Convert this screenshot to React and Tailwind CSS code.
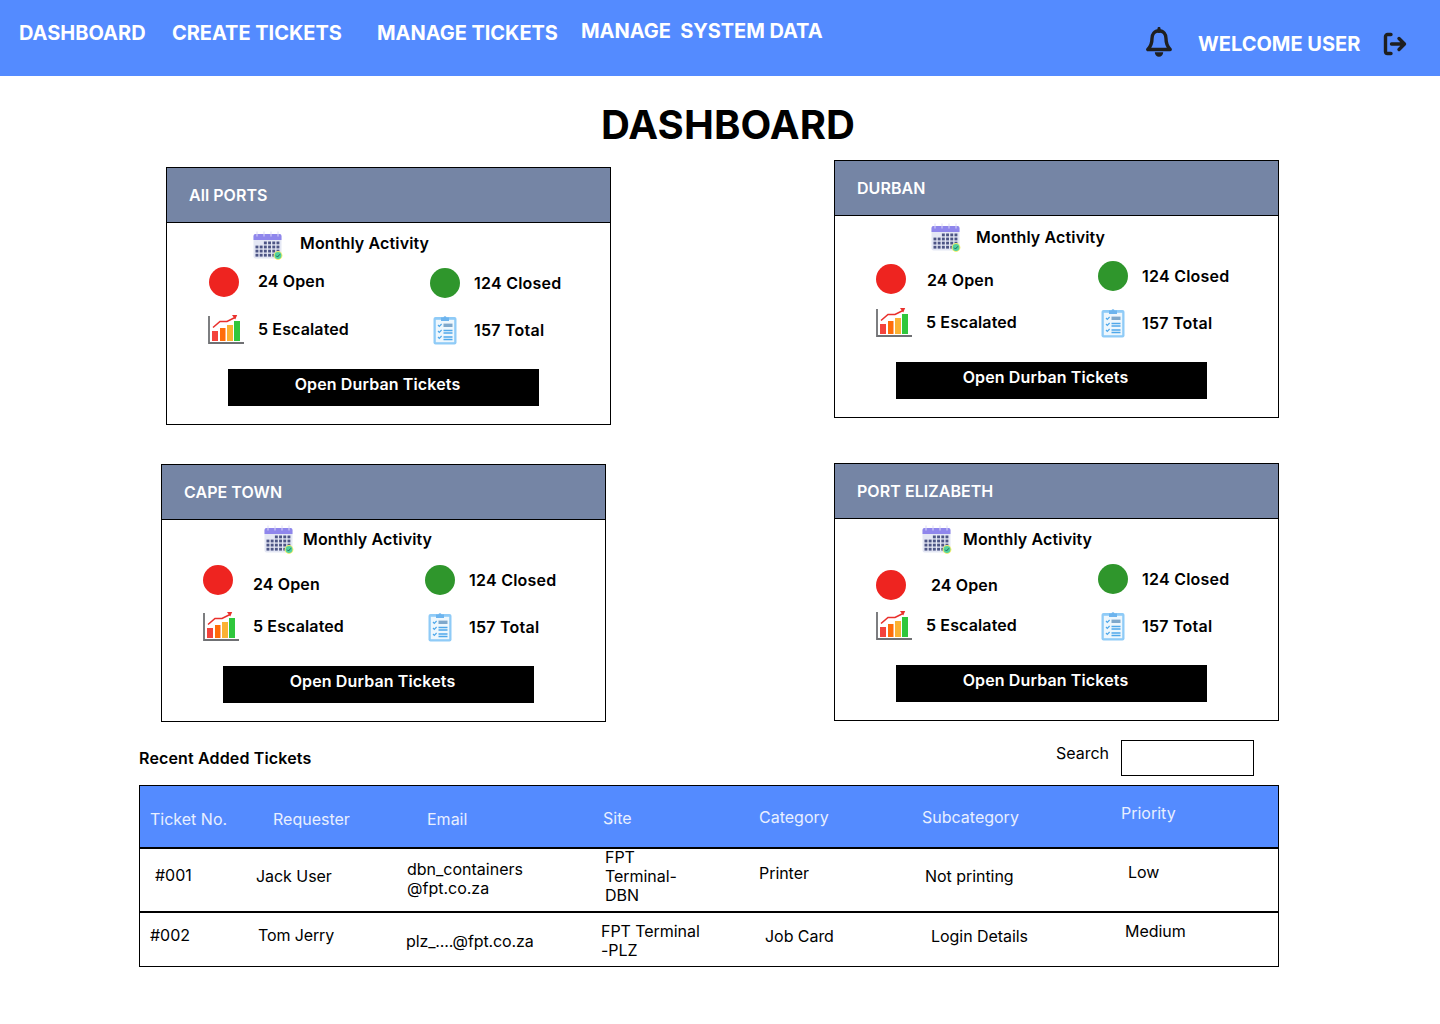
const sans = "font-['Inter','Liberation_Sans',sans-serif]";
const semi = "text-base leading-5 font-semibold tracking-[0.13px] text-black";
const semiNum = "text-base leading-5 font-semibold tracking-[0.24px] text-black";

function Bell() {
  return (
    <svg width="26" height="30" viewBox="0 0 26 30" fill="none" className="shrink-0">
      <path d="M13 3.8c-4.6 0-7 3.5-7 7.8 0 5.4-1.3 8.1-4.2 10.9h22.4c-2.9-2.8-4.2-5.5-4.2-10.9 0-4.3-2.4-7.8-7-7.8z" stroke="#1f1f1f" strokeWidth="3.4" strokeLinejoin="round" />
      <path d="M13 1.4v3" stroke="#1f1f1f" strokeWidth="3" strokeLinecap="round" />
      <path d="M8.8 25.2h8.4c0 2.6-1.9 4.6-4.2 4.6s-4.2-2-4.2-4.6z" fill="#1f1f1f" />
    </svg>
  );
}

function Logout() {
  return (
    <svg width="24" height="24" viewBox="0 0 24 24" fill="none" className="shrink-0">
      <path d="M8 2.5H4.5a2 2 0 0 0-2 2v15a2 2 0 0 0 2 2H8" stroke="#1f1f1f" strokeWidth="3.4" strokeLinecap="round" />
      <path d="M8.5 12h12M16 6.5l5.5 5.5-5.5 5.5" stroke="#1f1f1f" strokeWidth="3.4" strokeLinecap="round" strokeLinejoin="round" />
    </svg>
  );
}

function Calendar() {
  const dots = [];
  for (let r = 0; r < 4; r++) {
    for (let c = 0; c < 6; c++) {
      if (r === 0 && c < 2) continue;
      dots.push(<rect key={`${r}-${c}`} x={2.5 + c * 4.2} y={10.5 + r * 4.1} width="2.9" height="2.8" fill="#4d5585" />);
    }
  }
  return (
    <svg width="30" height="29" viewBox="0 0 30 29" className="block">
      <rect x="0.5" y="3" width="28" height="24.5" rx="2" fill="#e4e7f4" />
      <path d="M0.5 5a2 2 0 0 1 2-2h24a2 2 0 0 1 2 2v4h-28z" fill="#8f86ec" />
      <path d="M4 0.5v5M11 0.5v5M18 0.5v5M25 0.5v5" stroke="#dcd9f7" strokeWidth="1" />
      {dots}
      <circle cx="25" cy="24.5" r="4.4" fill="#f3ee6c" />
      <circle cx="25" cy="24.5" r="3.4" fill="#4fd0a0" />
      <path d="M23.2 24.7l1.3 1.3 2.4-2.7" stroke="#1e5a50" strokeWidth="0.9" fill="none" />
    </svg>
  );
}

function Chart() {
  return (
    <svg width="36" height="30" viewBox="0 0 36 30" className="shrink-0">
      <path d="M1 2v27h35" stroke="#6f7073" strokeWidth="1.8" fill="none" />
      <rect x="4" y="17" width="6" height="10" fill="#f4433c" />
      <rect x="12" y="14" width="5.5" height="13" fill="#ff6d0a" />
      <rect x="19" y="11" width="6" height="16" fill="#fbb232" />
      <rect x="26" y="7" width="6" height="20" fill="#2fc73c" />
      <path d="M5 13.5l7-6h7l8-4" stroke="#e9302c" strokeWidth="1.6" fill="none" />
      <path d="M24 1h5.2l-2 4.4z" fill="#e9302c" />
    </svg>
  );
}

function Clipboard() {
  return (
    <svg width="24" height="31" viewBox="0 0 24 31" className="shrink-0">
      <rect x="0.5" y="3" width="23" height="27.5" rx="2" fill="#8fcbf7" />
      <rect x="2.8" y="5.8" width="18.4" height="22.4" fill="#eef7fd" />
      <path d="M8 3.4h2.4a1.7 1.7 0 0 1 3.2 0H16v3.6H8z" fill="#6db4ee" />
      <path d="M5 11l1.3 1.3L8.6 10M5 17l1.3 1.3 2.3-2.3M5 23l1.3 1.3 2.3-2.3" stroke="#4fa8ea" strokeWidth="1.2" fill="none" />
      <path d="M10.5 9.6h9v3.4h-9z" fill="#7fa8cb" />
      <path d="M10.5 16.5h9M10.5 19h9M10.5 23h9M10.5 25.5h9" stroke="#4fa8ea" strokeWidth="1.3" />
    </svg>
  );
}

function Card({ title, box, monthlyRow, calSlot, monthlyText, pad, col = "w-[222px]", redCls, openText, leftCol, escCol }) {
  return (
    <div className={`${box} h-[258px] w-[445px] shrink-0 border border-black bg-white`}>
      <div className="flex h-[55px] items-center border-b border-black bg-[#7585a5] pl-[22px]">
        <span className="text-base leading-5 font-semibold tracking-[0.05px] text-white">{title}</span>
      </div>
      <div className="h-[146px]">
        <div className={`flex h-[45px] items-start ${monthlyRow}`}>
          <div className={calSlot}>
            <Calendar />
          </div>
          <span className={`${semi} ${monthlyText}`}>Monthly Activity</span>
        </div>
        <div className={`flex h-[46px] items-start ${pad}`}>
          <div className={`flex ${col} shrink-0 items-start`}>
            <div className={leftCol}>
              <div className={`h-[30px] w-[30px] rounded-full bg-[#ee2420] ${redCls}`} />
            </div>
            <span className={`${semi} ${openText}`}>24 Open</span>
          </div>
          <div className="flex items-start">
            <div className="w-[44px] shrink-0">
              <div className="h-[30px] w-[30px] rounded-full bg-[#2f962c]" />
            </div>
            <span className={`${semiNum} mt-[5px]`}>124 Closed</span>
          </div>
        </div>
        <div className={`flex h-[55px] items-start ${pad}`}>
          <div className={`flex ${col} shrink-0 items-start`}>
            <div className={escCol}>
              <Chart />
            </div>
            <span className={`${semi} mt-[5px]`}>5 Escalated</span>
          </div>
          <div className="flex items-start">
            <div className="w-[44px] shrink-0 pl-[3px]">
              <Clipboard />
            </div>
            <span className={`${semiNum} mt-[6px]`}>157 Total</span>
          </div>
        </div>
      </div>
      <button className="ml-[61px] block h-[37px] w-[311px] bg-black pr-[12px] pb-[7px] text-base leading-5 font-semibold tracking-[0.13px] text-white">Open Durban Tickets</button>
    </div>
  );
}

function Cell({ w, mt, children, cls = "tracking-[-0.05px]" }) {
  return <div className={`${w} ${mt} shrink-0 text-base leading-[19px] ${cls}`}>{children}</div>;
}

export default function App() {
  return (
    <div className={`${sans} min-h-[1024px] bg-white text-black`}>
      <header className="flex h-[76px] items-start bg-[#548bff] text-xl leading-6 font-bold text-white">
        <span className="mt-[21px] ml-[19px] w-[153px] shrink-0">DASHBOARD</span>
        <span className="mt-[21px] w-[205px] shrink-0 tracking-[-0.03px]">CREATE TICKETS</span>
        <span className="mt-[21px] w-[204px] shrink-0 tracking-[-0.05px]">MANAGE TICKETS</span>
        <span className="mt-[19px] w-[565px] shrink-0 whitespace-pre tracking-[-0.05px]">MANAGE  SYSTEM DATA</span>
        <span className="mt-[27px] w-[52px] shrink-0"><Bell /></span>
        <span className="mt-[32px] w-[185px] shrink-0">WELCOME USER</span>
        <span className="mt-[32px]"><Logout /></span>
      </header>

      <h1 className="h-[84px] pt-[25px] pl-[16px] text-center text-[40px] leading-[48px] font-bold tracking-[0.1px]">DASHBOARD</h1>

      <div className="flex items-start">
        <Card
          title="All PORTS"
          box="ml-[166px] mt-[7px]"
          monthlyRow="pl-[86px]"
          calSlot="w-[47px] shrink-0 pt-[8px]"
          monthlyText="mt-[10px]"
          pad="pl-[42px]"
          col="w-[221px]"
          redCls="-mt-px"
          openText="mt-[3px]"
          leftCol="w-[49px] shrink-0"
          escCol="w-[49px] shrink-0 -translate-x-px"
        />
        <Card
          title="DURBAN"
          box="ml-[223px]"
          monthlyRow="pl-[96px]"
          calSlot="w-[45px] shrink-0 pt-[7px]"
          monthlyText="mt-[11px]"
          pad="pl-[41px]"
          redCls="mt-[3px]"
          openText="mt-[9px]"
          leftCol="w-[51px] shrink-0"
          escCol="w-[50px] shrink-0"
        />
      </div>

      <div className="mt-[38px] flex items-start">
        <Card
          title="CAPE TOWN"
          box="ml-[161px] mt-px"
          monthlyRow="pl-[102px]"
          calSlot="w-[39px] shrink-0 pt-[5px]"
          monthlyText="mt-[9px]"
          pad="pl-[41px]"
          redCls=""
          openText="mt-[9px]"
          leftCol="w-[50px] shrink-0"
          escCol="w-[50px] shrink-0"
        />
        <Card
          title="PORT ELIZABETH"
          box="ml-[228px]"
          monthlyRow="pl-[87px]"
          calSlot="w-[41px] shrink-0 pt-[6px]"
          monthlyText="mt-[10px]"
          pad="pl-[41px]"
          redCls="mt-[6px]"
          openText="mt-[11px]"
          leftCol="w-[55px] shrink-0"
          escCol="w-[50px] shrink-0"
        />
      </div>

      <div className="mt-[18px] ml-[139px] flex h-[36px] w-[1115px] items-start">
        <span className="mt-[8px] text-base leading-5 font-semibold tracking-[0.15px]">Recent Added Tickets</span>
        <span className="mt-[3px] ml-auto text-base leading-5">Search</span>
        <div className="ml-[12px] h-[36px] w-[133px] border border-black bg-white" />
      </div>

      <div className="mt-[9px] ml-[139px] w-[1140px] border border-black">
        <div className="flex h-[61px] items-start bg-[#548bff] text-[#e8efff]">
          <Cell cls="" w="w-[123px] ml-[10px]" mt="mt-[24px]">Ticket No.</Cell>
          <Cell cls="" w="w-[154px]" mt="mt-[24px]">Requester</Cell>
          <Cell cls="" w="w-[176px]" mt="mt-[24px]">Email</Cell>
          <Cell cls="" w="w-[156px]" mt="mt-[23px]">Site</Cell>
          <Cell cls="" w="w-[163px]" mt="mt-[22px]">Category</Cell>
          <Cell cls="" w="w-[199px]" mt="mt-[22px]">Subcategory</Cell>
          <Cell cls="" w="w-[100px]" mt="mt-[18px]">Priority</Cell>
        </div>
        <div className="flex h-[66px] items-start border-t-2 border-b-2 border-black">
          <Cell w="w-[101px] ml-[15px]" mt="mt-[17px]">#001</Cell>
          <Cell w="w-[151px]" mt="mt-[18px]">Jack User</Cell>
          <Cell cls="" w="w-[198px]" mt="mt-[11px]">dbn_containers<br />@fpt.co.za</Cell>
          <Cell w="w-[154px]" mt="-mt-[1px]">FPT<br />Terminal-<br />DBN</Cell>
          <Cell w="w-[166px]" mt="mt-[15px]">Printer</Cell>
          <Cell w="w-[203px]" mt="mt-[18px]">Not printing</Cell>
          <Cell w="w-[100px]" mt="mt-[14px]">Low</Cell>
        </div>
        <div className="flex h-[53px] items-start">
          <Cell w="w-[108px] ml-[10px]" mt="mt-[13px]">#002</Cell>
          <Cell cls="tracking-[-0.12px]" w="w-[148px]" mt="mt-[13px]">Tom Jerry</Cell>
          <Cell cls="tracking-[-0.12px]" w="w-[195px]" mt="mt-[19px]">plz_....@fpt.co.za</Cell>
          <Cell w="w-[164px]" mt="mt-[9px]">FPT Terminal<br />-PLZ</Cell>
          <Cell w="w-[166px]" mt="mt-[14px]">Job Card</Cell>
          <Cell w="w-[194px]" mt="mt-[14px]">Login Details</Cell>
          <Cell w="w-[100px]" mt="mt-[9px]">Medium</Cell>
        </div>
      </div>
    </div>
  );
}
